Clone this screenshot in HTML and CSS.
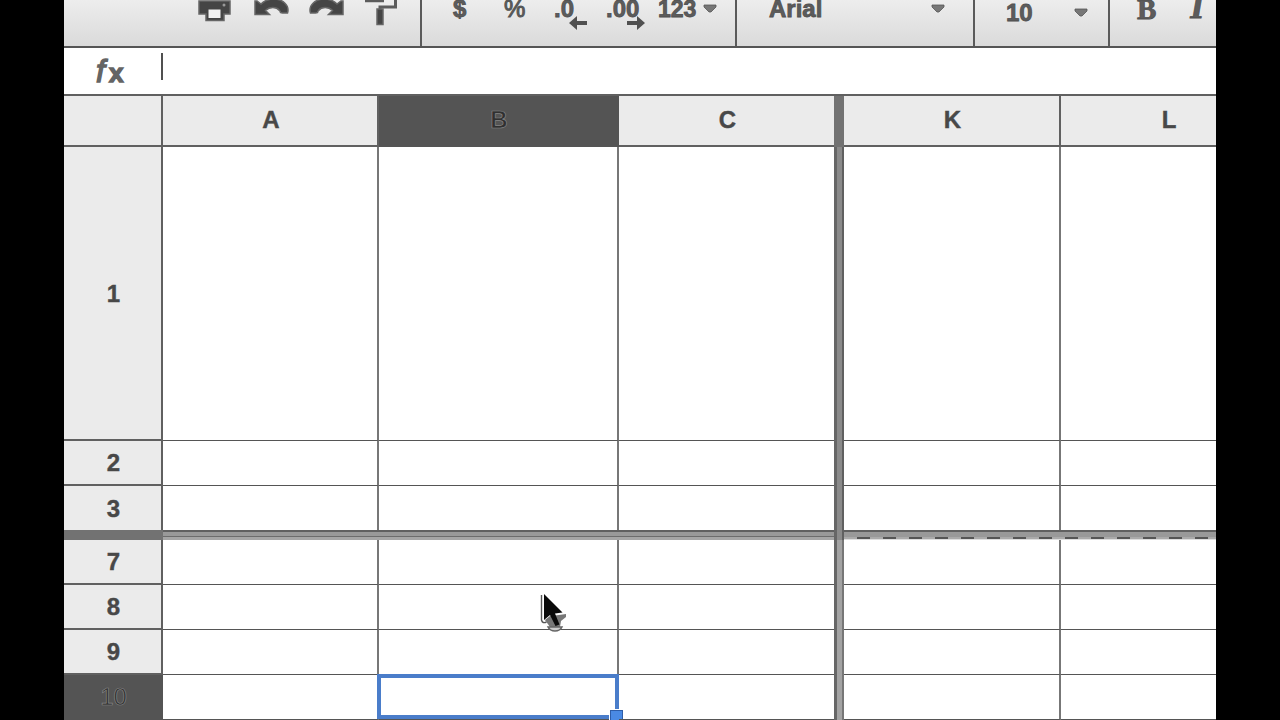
FILE: index.html
```html
<!DOCTYPE html>
<html lang="en">
<head>
    <meta charset="UTF-8">
    <meta name="viewport" content="width=device-width, initial-scale=1.0">
    <title>Spreadsheet</title>
    <link rel="stylesheet" href="styles.css">
</head>
<body>
<div class="app">
    <div class="toolbar">
        <div class="group group-file">
            <svg class="icon" width="36" height="32" viewBox="0 0 36 32">
                <path class="ink" d="M2 1h31v13h-6v6.500H9V14H2z"/>
                <path d="M11.500 9.500h12v8.500h-12z" fill="#f2f2f2"/>
                <circle cx="27" cy="5" r="1.500" fill="#999"/>
            </svg>
            <svg class="icon" width="36" height="32" viewBox="0 0 36 32">
                <path class="ink" d="M2 1v13.500h14.500L12.500 10.500c4-4 11-4 14 0 2 2-1 2 3 2.500h5C37 5 29-1 21-1c-5 0-9 1-13 5L4 1z"/>
            </svg>
            <svg class="icon" width="36" height="32" viewBox="0 0 36 32">
                <path class="ink" d="M34 1v13.500H19.500l4-4c-4-4-11-4-14 0-2 2 1 2-3 2.500h-5C-1 5 7-1 15-1c5 0 9 1 13 5l4-3z"/>
            </svg>
            <svg class="icon" width="36" height="32" viewBox="0 0 36 32">
                <path d="M0 .8h19M30.500-1v8H15v4" fill="none" stroke="#5c5c5c" stroke-width="3"/>
                <path class="ink" d="M12 9h6v15.500h-6z"/>
            </svg>
        </div>
        <div class="group group-format">
            <span class="tool currency">$</span>
            <span class="tool percent">%</span>
            <span class="tool less">.0
                <svg class="arrow" width="20" height="16" viewBox="0 0 20 16"><path d="M1 8l8-7v5h10v4H9v5z"/></svg>
            </span>
            <span class="tool more">.00
                <svg class="arrow" width="20" height="16" viewBox="0 0 20 16"><path d="M19 8l-8-7v5H1v4h10v5z"/></svg>
            </span>
            <span class="tool number">123</span>
            <svg class="caret" width="14" height="9" viewBox="0 0 14 9"><path d="M1 1h12v2L8 8H6L1 3z"/></svg>
        </div>
        <div class="group group-font">
            <span class="tool">Arial</span>
            <svg class="caret" width="14" height="9" viewBox="0 0 14 9"><path d="M1 1h12v2L8 8H6L1 3z"/></svg>
        </div>
        <div class="group group-size">
            <span class="tool">10</span>
            <svg class="caret" width="14" height="9" viewBox="0 0 14 9"><path d="M1 1h12v2L8 8H6L1 3z"/></svg>
        </div>
        <div class="group group-style">
            <span class="tool bold">B</span>
            <span class="tool italic">I</span>
        </div>
    </div>

    <div class="formula-bar">
        <span class="fx"><i>f</i><b>x</b></span>
        <span class="caret-line"></span>
    </div>

    <div class="sheet">
        <div class="head"></div>
        <div class="head">A</div>
        <div class="head selected">B</div>
        <div class="head last">C</div>
        <div class="freeze-head"></div>
        <div class="head">K</div>
        <div class="head">L</div>

        <div class="row-head">1</div>
        <div class="cell"></div><div class="cell"></div><div class="cell last"></div>
        <div class="freeze-v"></div>
        <div class="cell"></div><div class="cell"></div>

        <div class="row-head">2</div>
        <div class="cell"></div><div class="cell"></div><div class="cell last"></div>
        <div class="freeze-v"></div>
        <div class="cell"></div><div class="cell"></div>

        <div class="row-head last-row">3</div>
        <div class="cell last-row"></div><div class="cell last-row"></div><div class="cell last last-row"></div>
        <div class="freeze-v"></div>
        <div class="cell last-row"></div><div class="cell last-row"></div>

        <div class="freeze-head"></div>
        <div class="freeze-h"></div>
        <div class="freeze-v"></div>
        <div class="freeze-h dashed"></div>

        <div class="row-head">7</div>
        <div class="cell"></div><div class="cell"></div><div class="cell last"></div>
        <div class="freeze-v low"></div>
        <div class="cell"></div><div class="cell"></div>

        <div class="row-head">8</div>
        <div class="cell"></div><div class="cell"></div><div class="cell last"></div>
        <div class="freeze-v low"></div>
        <div class="cell"></div><div class="cell"></div>

        <div class="row-head">9</div>
        <div class="cell"></div><div class="cell"></div><div class="cell last"></div>
        <div class="freeze-v low"></div>
        <div class="cell"></div><div class="cell"></div>

        <div class="row-head selected">10</div>
        <div class="cell"></div>
        <div class="cell"><div class="selection"><span class="handle"></span></div></div>
        <div class="cell last"></div>
        <div class="freeze-v low"></div>
        <div class="cell"></div><div class="cell"></div>
    </div>

    <svg class="pointer" width="32" height="44" viewBox="0 0 32 44">
        <path d="M2 3v31l5-2 4 6h9l3-8 5-8L6 3z" fill="#fff"/>
        <path d="M2.500 5v25q1 4 5 2" fill="none" stroke="#555" stroke-width="1.400"/>
        <path d="M6 30l5-4 9-1 7-1v3l-5 4-1 6H11z" fill="#777"/>
        <path d="M9 37h14q-2 4-7 4t-7-4z" fill="#ccc" stroke="#666" stroke-width="1.500"/>
        <path d="M5 4v26l6-5 5.500 11 4-1.500-4.500-11 7.500-1z" fill="#0a0a0a"/>
    </svg>
</div>
</body>
</html>
```

FILE: styles.css
```css
body {
    margin: 0;
    background-color: #000;
    font-family: "Liberation Sans", Arial, sans-serif;
}

.app {
    position: relative;
    width: 1152px;
    height: 720px;
    margin: 0 auto;
    background-color: #fff;
    overflow: hidden;
}

/* toolbar */
.toolbar {
    display: flex;
    height: 46px;
    border-bottom: 2px solid #555;
    background: linear-gradient(#ededed, #dadada);
    overflow: hidden;
}

.group {
    display: flex;
    align-items: flex-start;
    flex-shrink: 0;
    box-sizing: border-box;
    height: 46px;
    border-right: 2px solid #5a5a5a;
}

.group-file {
    width: 358px;
    padding-left: 133px;
    gap: 20px;
}

.group-format {
    width: 315px;
    padding-left: 31px;
}

.group-font {
    width: 238px;
    padding-left: 32px;
    justify-content: space-between;
    padding-right: 28px;
}

.group-size {
    width: 135px;
    padding-left: 31px;
    padding-right: 20px;
    justify-content: space-between;
}

.group-style {
    border-right: none;
    padding-left: 27px;
    gap: 34px;
}

.ink {
    fill: #454545;
    stroke: #666;
    stroke-width: 1.5;
}

.tool {
    position: relative;
    margin-top: -3px;
    font-size: 24px;
    line-height: 24px;
    font-weight: bold;
    color: #5c5c5c;
    -webkit-text-stroke: 0.8px #505050;
    white-space: nowrap;
}

.currency {
    width: 51px;
}

.percent {
    width: 50px;
    font-size: 24px;
    font-weight: normal;
    -webkit-text-stroke: 1px #555;
}

.less {
    width: 52px;
}

.more {
    width: 52px;
}

.number {
    width: 45px;
    font-size: 23px;
}

.arrow {
    position: absolute;
    left: 14px;
    top: 18px;
    fill: #505050;
}

.more .arrow {
    left: 20px;
}

.caret {
    margin-top: 4px;
    fill: #777;
    stroke: #555;
    stroke-width: 0.8;
}

.group-size .tool {
    margin-top: 1px;
}

.group-size .caret {
    margin-top: 8px;
}

.bold,
.italic {
    font-family: "Liberation Serif", "Times New Roman", serif;
    font-size: 29px;
}

.italic {
    font-style: italic;
    font-size: 36px;
    margin-top: -6px;
}

/* formula bar */
.formula-bar {
    display: flex;
    align-items: flex-start;
    height: 46px;
    border-bottom: 2px solid #606060;
}

.fx {
    width: 65px;
    padding-left: 32px;
    padding-top: 8px;
    font-size: 32px;
    line-height: 30px;
    color: #666;
    -webkit-text-stroke: 1.4px #646464;
}

.fx b {
    font-size: 26px;
    margin-left: 4px;
}

.caret-line {
    width: 2px;
    height: 27px;
    margin-top: 5px;
    background-color: #505050;
}

/* sheet */
.sheet {
    display: grid;
    grid-template-columns: 99px 216px 240px 215px 10px 217px 216px;
    grid-template-rows: 51px 294px 45px 44px 10px 45px 45px 45px 45px;
}

.head,
.row-head {
    display: flex;
    justify-content: center;
    align-items: center;
    box-sizing: border-box;
    border-right: 2px solid #606060;
    border-bottom: 2px solid #606060;
    background-color: #ebebeb;
    color: #484848;
    font-size: 24px;
    font-weight: bold;
    -webkit-text-stroke: 0.4px #484848;
}

.head {
    padding-left: 2px;
    padding-bottom: 2px;
}

.row-head {
    padding-left: 2px;
    padding-top: 1px;
}

.head.selected,
.row-head.selected {
    background-color: #545454;
    border-color: #545454;
    color: #303030;
    -webkit-text-stroke: 0.7px #858585;
}

.row-head.selected {
    font-weight: normal;
}

.cell {
    position: relative;
    box-sizing: border-box;
    border-right: 2px solid #777;
    border-bottom: 1px solid #555;
}

.head.last,
.cell.last {
    border-right: none;
}

.cell.last-row,
.row-head.last-row {
    border-bottom: none;
}

.freeze-head {
    background-color: #727272;
}

.freeze-v {
    background: linear-gradient(to right, #666 3px, #8a8a8a 3px, #8a8a8a 8px, #606060 8px);
}

.freeze-v.low {
    background: linear-gradient(to right, #666 3px, #a3a3a3 3px, #a3a3a3 8px, #777 8px);
}

.freeze-h {
    grid-column: span 3;
    background: linear-gradient(#606060 2px, #999 2px, #999 6px, #6c6c6c 6px, #6c6c6c 7px, #a5a5a5 7px);
}

.freeze-h.dashed {
    grid-column: span 2;
    background:
        repeating-linear-gradient(to right, #aaa 0, #aaa 13px, #555 13px, #555 26px) 0 7px / 100% 2px no-repeat,
        linear-gradient(#606060 2px, #999 2px, #999 9px, #ddd 9px);
}

.selection {
    position: absolute;
    left: -2px;
    top: -1px;
    width: 234px;
    height: 37px;
    border: 4px solid #4a7dca;
}

.handle {
    position: absolute;
    right: -8px;
    bottom: -8px;
    width: 11px;
    height: 11px;
    border: 1px solid #2e5da8;
    background-color: #4a8ae4;
    outline: 1px solid #fff;
}

.pointer {
    position: absolute;
    left: 475px;
    top: 590px;
}
```
